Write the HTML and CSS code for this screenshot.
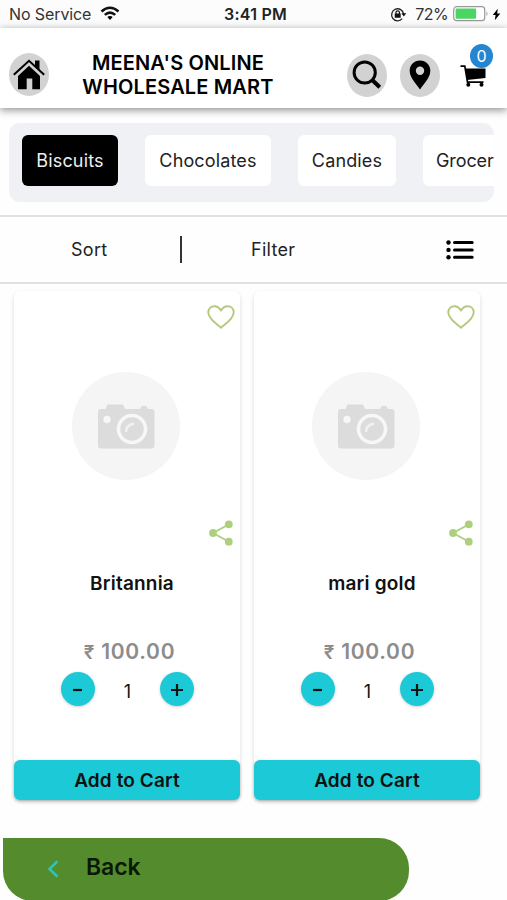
FILE: index.html
```html
<!DOCTYPE html>
<html lang="en">
<head>
<meta charset="utf-8">
<title>Meena's Online Wholesale Mart</title>
<link rel="stylesheet" href="styles.css">
</head>
<body>
<svg class="symbols" aria-hidden="true">
  <symbol id="heart" viewBox="0 0 28 24"><path d="M14 22.7C10.5 19.5 1.3 13.8 1.3 7.4 1.3 3.7 4 1.2 7.3 1.2c2.900 0 5.300 1.700 6.700 4.400 1.400-2.700 3.800-4.400 6.700-4.400 3.300 0 6 2.500 6 6.200 0 6.400-9.200 12.100-12.700 15.300z" fill="none" stroke="#b3c97e" stroke-width="1.900" stroke-linejoin="round"/></symbol>
  <symbol id="share" viewBox="0 0 24 26"><path d="M20 4.300 4 13l16 8.700" fill="none" stroke="#acd07d" stroke-width="1.800"/><g fill="#acd07d"><circle cx="19.800" cy="4.300" r="3.900"/><circle cx="4" cy="13" r="3.900"/><circle cx="19.800" cy="21.700" r="3.900"/></g></symbol>
  <symbol id="camera" viewBox="0 0 108 108"><circle cx="54" cy="54" r="54" fill="#f5f5f5"/><path d="M29 37h4.500l2-4.500h15.500l2 4.500h15l1.500-3h5l1.500 3h3.500q3 0 3 3v33.500q0 3-3 3H29q-3 0-3-3V40q0-3 3-3z" fill="#dcdcdc"/><circle cx="35" cy="47.500" r="3.700" fill="#f7f7f7"/><circle cx="60" cy="57" r="13.500" fill="none" stroke="#f7f7f7" stroke-width="3.500"/><path d="M54 60q0-7 8-8.500" fill="none" stroke="#f1f1f1" stroke-width="2.500"/></symbol>
</svg>
<div class="status">
  <div class="carrier"><span>No Service</span>
    <svg width="20" height="15" viewBox="0 0 20 15"><g fill="none" stroke="#111" stroke-width="2.500"><path d="M1.500 5.500q8.500-7.500 17 0"/><path d="M4.800 8.900q5.200-4.600 10.400 0"/></g><path d="M7.300 11.100q2.700-2 5.400 0L10 14z"/></svg>
  </div>
  <span class="clock">3:41 PM</span>
  <div class="power">
    <svg class="lock" width="17" height="15" viewBox="0 0 17 15"><path d="M12.200 11.700A6 6 0 1 1 13.600 7" fill="none" stroke="#222" stroke-width="1.300"/><path d="M11.300 6.300h5l-2.500 3.200zM4.700 6.500h6v4.300h-6z" fill="#111"/><path d="M6 7V5.300q0-1.500 1.700-1.500t1.700 1.500V7" fill="none" stroke="#111" stroke-width="1.200"/></svg>
    <span class="percent">72%</span>
    <svg class="battery" width="36" height="16" viewBox="0 0 36 16"><rect x=".7" y=".7" width="31" height="14" rx="3" fill="#fff" stroke="#999" stroke-width="1.200"/><rect x="2.600" y="2.600" width="20.500" height="10.200" rx="1" fill="#4cd562"/><path d="M33.500 5.300q2 2.500 0 5z" fill="#999"/></svg>
    <svg width="9" height="13" viewBox="0 0 9 13"><path d="M5.700.8.800 7h2.800l-.8 5.200L8.300 5.500H5.200z"/></svg>
  </div>
</div>
<header class="header">
  <a class="round home"><svg width="32" height="32" viewBox="0 0 32 32"><path d="M5 17 16 6.700 27 17v13.200h-7.700V19.500h-5.600v10.700H5z"/><path d="M.8 15.800 16 1.800l15.200 14" fill="none" stroke="#000" stroke-width="2"/><path d="M22 1.500h4.500v10L22 7.200z"/></svg></a>
  <h1>MEENA'S ONLINE<br>WHOLESALE MART</h1>
  <a class="round search"><svg width="30" height="30" viewBox="0 0 30 30"><circle cx="12.700" cy="12.500" r="10.600" fill="none" stroke="#000" stroke-width="3"/><path d="m20.500 20.200 7.300 7" stroke="#000" stroke-width="4"/></svg></a>
  <a class="round place"><svg width="22" height="30" viewBox="0 0 22 30"><path fill-rule="evenodd" d="M11 .5C5 .5.700 5 .700 10.700.700 18 7 23 11 29.500 15 23 21.300 18 21.300 10.700 21.300 5 17 .500 11 .500zm0 6a4.200 4.200 0 1 1 0 8.400 4.200 4.200 0 0 1 0-8.400z"/></svg></a>
  <a class="cart"><svg width="26" height="24" viewBox="0 0 26 24"><path d="M.5 2.200h4.300l2.700 16h16" fill="none" stroke="#000" stroke-width="1.700"/><path d="M5 4.500h20.500V14l-18.500 2z"/><circle cx="8.300" cy="20.800" r="2"/><circle cx="21.500" cy="20.800" r="2"/></svg><b class="badge">0</b></a>
</header>
<nav class="cats">
  <a class="chip on">Biscuits</a><a class="chip chocolate">Chocolates</a><a class="chip candy">Candies</a><a class="chip grocery">Grocer</a>
</nav>
<div class="tools">
  <span class="sort">Sort</span><i class="divider"></i><span class="filter">Filter</span>
  <svg width="28" height="20" viewBox="0 0 28 20"><g fill="#000"><circle cx="2.500" cy="2.500" r="2.200"/><circle cx="2.500" cy="9.900" r="2.200"/><circle cx="2.500" cy="17.300" r="2.200"/></g><path d="M8.500 2.500h17.700M8.500 9.900h17.700M8.500 17.300h17.700" stroke="#000" stroke-width="3" stroke-linecap="round"/></svg>
</div>
<main class="products">
  <article class="card">
    <svg class="heart"><use href="#heart"/></svg>
    <svg class="photo"><use href="#camera"/></svg>
    <svg class="share"><use href="#share"/></svg>
    <h2>Britannia</h2>
    <p class="price"><span class="rupee">₹</span> 100.00</p>
    <div class="qty"><button class="step"><svg width="14" height="14" viewBox="0 0 14 14"><path d="M2 8h9"/></svg></button><span>1</span><button class="step"><svg width="14" height="14" viewBox="0 0 14 14"><path d="M1 8h12M7 2v12"/></svg></button></div>
    <button class="add">Add to Cart</button>
  </article>
  <article class="card">
    <svg class="heart"><use href="#heart"/></svg>
    <svg class="photo"><use href="#camera"/></svg>
    <svg class="share"><use href="#share"/></svg>
    <h2>mari gold</h2>
    <p class="price"><span class="rupee">₹</span> 100.00</p>
    <div class="qty"><button class="step"><svg width="14" height="14" viewBox="0 0 14 14"><path d="M2 8h9"/></svg></button><span>1</span><button class="step"><svg width="14" height="14" viewBox="0 0 14 14"><path d="M1 8h12M7 2v12"/></svg></button></div>
    <button class="add">Add to Cart</button>
  </article>
</main>
<a class="back"><svg width="12" height="18" viewBox="0 0 12 18"><path d="M10.500 1.300 2.500 9l8 7.700" fill="none" stroke="#2fc3b5" stroke-width="2.600"/></svg><span>Back</span></a>
</body>
</html>
```
FILE: styles.css
```css
* { box-sizing: border-box; }
body { margin: 0; height: 900px; overflow: hidden; background: #fefefe; color: #111; font-family: Inter, "Liberation Sans", sans-serif; font-size: 18px; }
svg { display: block; flex: none; }
.symbols { position: absolute; width: 0; height: 0; }
h1, h2, p { margin: 0; }
button { border: 0; padding: 0; font: inherit; color: inherit; }

.status { height: 28px; display: grid; grid-template-columns: 224px 1fr auto; align-items: center; padding: 0 6px 0 9px; background: #fcfcfc; font-size: 16px; color: #333; white-space: nowrap; }
.carrier, .power { display: flex; align-items: center; }
.carrier { gap: 9px; letter-spacing: -.1px; }
.carrier svg { margin-top: -1px; }
.clock { margin-left: -9px; font-weight: 600; color: #222; letter-spacing: .25px; }
.lock { margin-right: 8px; }
.percent { letter-spacing: -.6px; }
.battery { margin: 0 3px 0 5px; }

.header { position: relative; height: 80px; display: flex; align-items: center; padding: 0 20px 0 9px; background: #fff; box-shadow: 0 2px 8px rgba(0,0,0,.45); }
.round { flex: none; width: 40px; height: 43px; border-radius: 50%; background: #d2d2d2; display: flex; align-items: center; justify-content: center; margin-top: 14px; }
.home { margin-top: 13px; }
.home svg { margin: 0 1px 0 0; }
.header h1 { width: 224px; margin: 14px 0 0 17px; text-align: center; font-size: 20px; line-height: 24px; font-weight: 600; letter-spacing: .15px; color: #000; white-space: nowrap; }
.search { margin-left: 57px; }
.place { margin-left: 13px; }
.cart { position: relative; margin: 15px 0 0 20px; }
.badge { position: absolute; left: 10px; top: -20px; width: 23px; height: 24px; border-radius: 50%; background: #2585d0; color: #fff; text-align: center; font-size: 16px; line-height: 24px; font-weight: 400; }

.cats { height: 79px; margin: 15px 13px 0 9px; padding: 12px 0 0 13px; display: flex; gap: 27px; overflow: hidden; background: #f0f1f5; border-radius: 11px; }
.chip { flex: none; height: 51px; width: 96px; border-radius: 6px; background: #fff; color: #222; text-align: center; line-height: 51px; font-size: 18px; letter-spacing: .15px; }
.chip.on { background: #000; color: #eee; }
.chocolate { width: 126px; }
.candy { width: 98px; }
.grocery { width: 98px; padding-left: 13px; text-align: left; letter-spacing: -.1px; }

.tools { height: 69px; margin-top: 13px; border-top: 2px solid #e1e1e1; border-bottom: 2px solid #e1e1e1; display: flex; align-items: center; padding-left: 71px; color: #222; letter-spacing: .3px; }
.sort { width: 109px; }
.divider { width: 2px; height: 27px; background: #333; }
.filter { width: 264px; padding-left: 69px; }

.products { display: flex; gap: 14px; padding: 7px 14px 0; }
.card { width: 226px; height: 509px; display: flex; flex-direction: column; align-items: center; background: #fff; border-radius: 6px; box-shadow: 0 2px 4px rgba(0,0,0,.14); }
.heart { width: 28px; height: 24px; margin: 14px 5px 0 auto; }
.photo { width: 108px; height: 108px; margin: 43px 2px 0 0; }
.share { width: 24px; height: 26px; margin: 40px 7px 0 auto; }
.card h2 { height: 24px; margin: 26px 0 0 10px; font-size: 19px; line-height: 24px; font-weight: 600; color: #111; letter-spacing: .2px; }
.price { margin: 43px 0 0 5px; height: 26px; line-height: 26px; font-size: 21px; font-weight: 600; color: #8c8c8c; white-space: nowrap; letter-spacing: .7px; }
.rupee { font-size: 19px; }
.qty { width: 134px; height: 34px; margin: 7px 0 0 1px; display: flex; align-items: center; justify-content: space-between; }
.qty > span { padding-top: 4px; }
.step { width: 34px; height: 34px; display: flex; align-items: center; justify-content: center; border-radius: 50%; background: #1cc9d6; box-shadow: 0 1px 3px rgba(0,0,0,.2); }
.step path { fill: none; stroke: #111; stroke-width: 2.200; }
.add { width: 100%; height: 40px; margin-top: auto; border-radius: 6px; background: #1cc9d6; font-size: 19px; font-weight: 600; letter-spacing: .1px; box-shadow: 0 1px 3px rgba(0,0,0,.25); }

.back { width: 406px; height: 63px; margin: 38px 0 0 3px; padding: 0 0 6px 44px; display: flex; align-items: center; gap: 27px; border-radius: 0 30px 30px 30px; background: #548b2d; color: #0a1805; font-size: 23px; font-weight: 600; letter-spacing: -.1px; }
.back svg { margin-top: 4px; }
```
